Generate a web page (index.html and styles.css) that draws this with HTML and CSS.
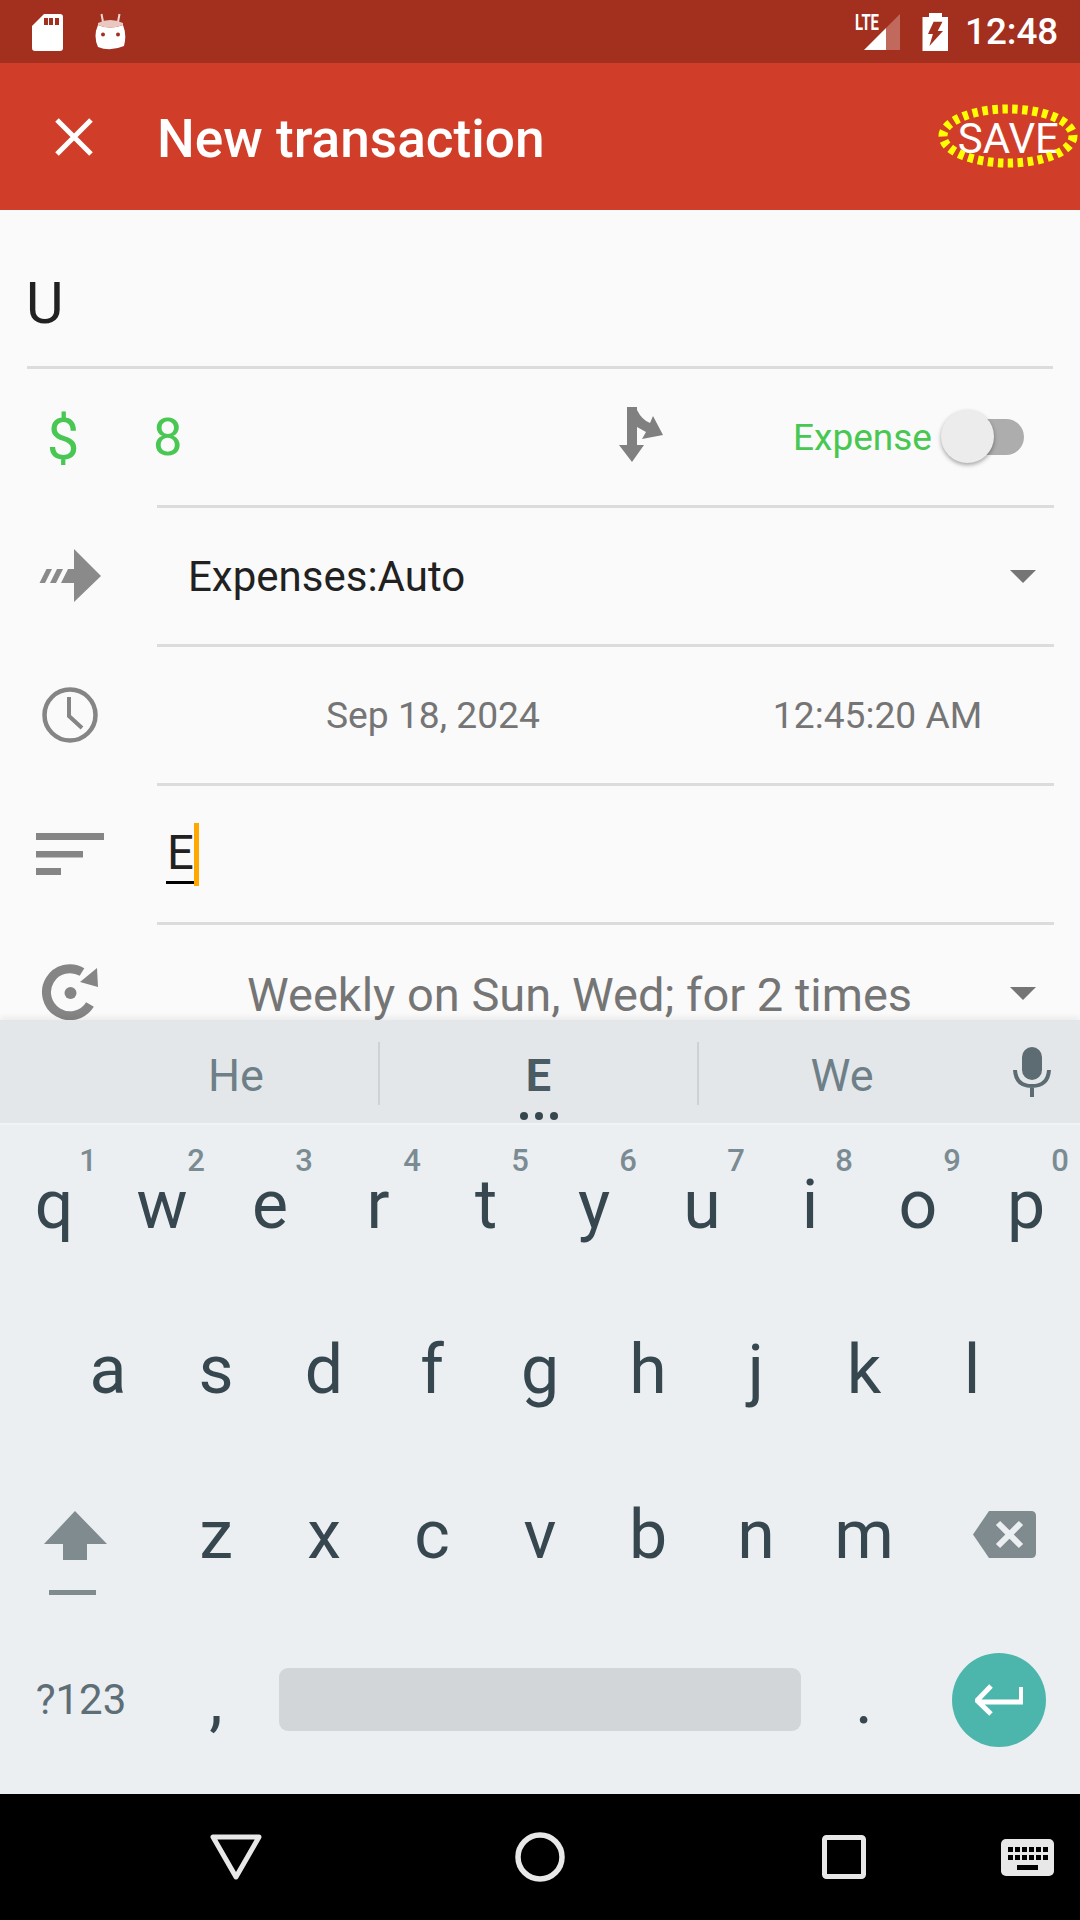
FILE: index.html
```html
<!doctype html>
<html>
<head>
<meta charset="utf-8">
<title>New transaction</title>
<link rel="stylesheet" href="styles.css">
</head>
<body>
<div class="app">
	<div class="status">
		<svg class="st-sd" width="32" height="38" viewBox="32 12 32 38"><path fill="#fff" d="M44 13H60q3 0 3 3V47q0 3-3 3H35q-3 0-3-3V25Z"/><path fill="#a32f1f" d="M44 17h4v7h-4zM49 17h4v7h-4zM55 17h4v7h-4z"/></svg>
		<svg class="st-bot" width="32" height="38" viewBox="95 10 32 38"><path stroke="#f0d8d4" stroke-width="2" d="M101.5 11l1.5 8M119.500 11l-1.500 8"/><path fill="#fff" d="M98 22Q110 27 123 22Q127 32 124 43Q110 49 98 44Q93 33 98 22Z"/><path fill="#e9c8c2" d="M98 20Q110 14 123 20V22Q110 27 98 22Z"/><circle cx="103" cy="31.500" r="2" fill="#a32f1f"/><circle cx="118" cy="31.500" r="2" fill="#a32f1f"/></svg>
		<svg class="st-net" width="46" height="38" viewBox="855 12 46 38"><text x="855" y="29" class="lte" textLength="24" lengthAdjust="spacingAndGlyphs">LTE</text><path fill="#fff" d="M864 49L886 27V49Z"/><path fill="#c0695c" d="M886 27L900 13V49H886Z"/></svg>
		<svg class="st-bat" width="26" height="38" viewBox="921 12 26 38"><path fill="#fff" d="M928 12h13v4h6V50H921.500V16H928Z"/><path fill="#a32f1f" d="M932.600 20.700H941.500L936.700 30H942L928.400 45L931.900 33H927Z"/></svg>
		<span class="clock">12:48</span>
	</div>

	<div class="toolbar">
		<svg class="tb-x" width="38" height="38" viewBox="0 0 38 38"><path stroke="#fff" stroke-width="5" d="M2 2L36 36M36 2L2 36"/></svg>
		<span class="tb-title">New transaction</span>
		<div class="save">
			SAVE
			<svg class="save-ring" width="140" height="66" viewBox="0 0 140 66"><ellipse cx="70" cy="33" rx="65" ry="27" fill="none" stroke="#ff0" stroke-width="9" stroke-dasharray="5.500 4.500"/></svg>
		</div>
	</div>

	<div class="form">
		<div class="name-row"><span class="name">U</span></div>

		<div class="row amount-row">
			<span class="ic currency">$</span>
			<div class="row-in">
				<span class="amount">8</span>
				<svg class="split" width="46" height="56" viewBox="617 409 46 56"><path fill="#808080" d="M626 409H636V412Q641 422 649 425L652 418L662 437L641 441L645 434L636 429V447H643L631 464L618 447H626Z"/></svg>
				<span class="kind">Expense</span>
				<div class="switch"><div class="thumb"></div></div>
			</div>
		</div>

		<div class="row">
			<div class="ic"><svg width="64" height="54" viewBox="38 549 64 54"><path fill="#8a8a8a" d="M74 549L101 576L74 602V583H61L68 569H74ZM39.500 583L46.500 569H52L45 583ZM50 583L57 569H63L56 583Z"/></svg></div>
			<div class="row-in">
				<span class="account">Expenses:Auto</span>
				<i class="caret"></i>
			</div>
		</div>

		<div class="row">
			<div class="ic"><svg width="56" height="56" viewBox="0 0 56 56"><circle cx="28" cy="28" r="25.500" fill="none" stroke="#858585" stroke-width="4.500"/><path fill="none" stroke="#858585" stroke-width="4" d="M27 10V29L40 41"/></svg></div>
			<div class="row-in when">
				<span>Sep 18, 2024</span>
				<span>12:45:20 AM</span>
			</div>
		</div>

		<div class="row">
			<div class="ic"><svg width="68" height="42" viewBox="0 0 68 42"><path fill="#858585" d="M0 0h68v7H0zM0 18h47v6.500H0zM0 35h25v7H0z"/></svg></div>
			<div class="row-in memo">
				<span class="memo-txt">E</span><i class="cursor"></i>
			</div>
		</div>

		<div class="row">
			<div class="ic"><svg width="60" height="60" viewBox="40 963 60 60"><path fill="none" stroke="#858585" stroke-width="9" d="M82 972A23.500 23.500 0 1 0 90 1004.500"/><path fill="#858585" d="M97 968L98 987L80 982Z"/><circle cx="70.500" cy="993" r="6" fill="#858585"/></svg></div>
			<div class="row-in">
				<span class="repeat">Weekly on Sun, Wed; for 2 times</span>
				<i class="caret"></i>
			</div>
		</div>
	</div>

	<div class="kbd">
		<div class="strip">
			<span class="sug">He</span>
			<span class="sug main">E<i class="dots"><b></b><b></b><b></b></i></span>
			<span class="sug">We</span>
			<svg class="mic" width="38" height="50" viewBox="0 0 38 50"><rect x="9" y="0" width="20" height="33" rx="10" fill="#5d6b73"/><path fill="none" stroke="#5d6b73" stroke-width="4" d="M2 23Q3 39 19 39Q35 39 36 23M19 38V50"/></svg>
		</div>

		<div class="keys">
			<div class="krow">
				<span class="key">q<em>1</em></span><span class="key">w<em>2</em></span><span class="key">e<em>3</em></span><span class="key">r<em>4</em></span><span class="key">t<em>5</em></span><span class="key">y<em>6</em></span><span class="key">u<em>7</em></span><span class="key">i<em>8</em></span><span class="key">o<em>9</em></span><span class="key">p<em>0</em></span>
			</div>
			<div class="krow second">
				<span class="key">a</span><span class="key">s</span><span class="key">d</span><span class="key">f</span><span class="key">g</span><span class="key">h</span><span class="key">j</span><span class="key">k</span><span class="key">l</span>
			</div>
			<div class="krow">
				<span class="key wide"><svg class="shift" width="64" height="86" viewBox="44 1509 64 86"><path fill="#7f8b8f" d="M75 1510L107 1543H87V1559H63V1543H44ZM49 1589H96V1594H49Z"/></svg></span>
				<span class="key">z</span><span class="key">x</span><span class="key">c</span><span class="key">v</span><span class="key">b</span><span class="key">n</span><span class="key">m</span>
				<span class="key wide"><svg class="bksp" width="64" height="48" viewBox="973 1511 64 48"><path fill="#7f8b8f" d="M989 1511H1031q5 0 5 5V1553q0 5-5 5H989L973 1534.500Z"/><path stroke="#eceff1" stroke-width="6" d="M998 1523L1021 1546M1021 1523L998 1546"/></svg></span>
			</div>
			<div class="krow last">
				<span class="key wide sym">?123</span>
				<span class="key">,</span>
				<span class="space-wrap"><i class="space"></i></span>
				<span class="key">.</span>
				<span class="key wide"><span class="enter"><svg width="48" height="32" viewBox="975 1686 48 32"><path fill="none" stroke="#fff" stroke-width="5" d="M1021.500 1689V1704H978M991 1688L977 1702.500L991 1716"/></svg></span></span>
			</div>
		</div>
	</div>

	<div class="nav">
		<svg class="nav-back" width="52" height="46" viewBox="0 0 52 46"><path fill="none" stroke="#e8e8e8" stroke-width="5" stroke-linejoin="round" d="M3 3H49L26 43Z"/></svg>
		<svg class="nav-home" width="50" height="50" viewBox="0 0 50 50"><circle cx="25" cy="25" r="22" fill="none" stroke="#e8e8e8" stroke-width="5.500"/></svg>
		<svg class="nav-rec" width="44" height="44" viewBox="0 0 44 44"><rect x="2.500" y="2.500" width="39" height="39" rx="2" fill="none" stroke="#e8e8e8" stroke-width="5"/></svg>
		<svg class="nav-kb" width="53" height="37" viewBox="0 0 53 37"><rect width="53" height="37" rx="5" fill="#e8e8e8"/><path fill="#000" d="M7 8h5v5H7zM14 8h5v5h-5zM21 8h5v5h-5zM28 8h5v5h-5zM35 8h5v5h-5zM42 8h5v5h-5zM7 16h5v5H7zM14 16h5v5h-5zM21 16h5v5h-5zM28 16h5v5h-5zM35 16h5v5h-5zM42 16h5v5h-5zM16 26h21v5H16z"/></svg>
	</div>
</div>
</body>
</html>
```

FILE: styles.css
```css
* {margin:0; padding:0; box-sizing:border-box;}
html, body {width:1080px; height:1920px; overflow:hidden;}
body {font-family:Roboto, "Noto Sans", sans-serif; background:#fafafa; color:#212121;}
i, em {font-style:normal;}
svg {display:block; flex:none;}

.app {display:flex; flex-direction:column; height:1920px;}

/* status bar */
.status {height:63px; background:#a32f1f; display:flex; align-items:center; padding:0 23px 0 32px; color:#fff;}
.st-bot {margin-left:31px;}
.st-net {margin-left:auto; overflow:visible;}
.st-bat {margin-left:21px;}
.lte {font:700 22px Roboto, sans-serif; fill:#fff;}
.clock {font-size:36.75px; font-weight:500; margin-left:17px; width:92px;}

/* toolbar */
.toolbar {height:147px; background:#d03e29; display:flex; align-items:center; color:#fff; padding-left:55px;}
.tb-title {font-size:53.2px; font-weight:500; margin-left:64px; margin-top:4px;}
.save {position:relative; margin-left:auto; margin-right:21px; margin-top:4px; font-size:42px; line-height:50px;}
.save-ring {position:absolute; left:-20px; top:-11px;}

/* form */
.form {height:810px; overflow:hidden;}
.name-row {height:159px; margin:0 27px; border-bottom:3px solid #dcdcdc; display:flex; align-items:flex-end; padding-bottom:31px;}
.name {font-size:57.75px; line-height:64px; margin-left:-1px;}
.row {height:139px; display:flex; align-items:stretch; padding-right:26px;}
.ic {width:157px; flex:none; display:flex; align-items:center; justify-content:center; padding:0 17px 4px 0;}
.row-in {flex:1; border-bottom:3px solid #dcdcdc; display:flex; align-items:center; position:relative;}

.currency {font-size:58px; color:#48c752; padding:0 31px 0 0;}
.amount {font-size:52.5px; color:#48c752; width:465px; flex:none; margin:0 0 0 -4px;}
.split {margin-top:-5px;}
.kind {font-size:37px; color:#48c752; margin-left:129px;}
.switch {width:79px; height:36px; background:#adadad; border-radius:18px; margin-left:13px; position:relative; flex:none;}
.thumb {position:absolute; left:-4px; top:-9px; width:53px; height:53px; border-radius:50%; background:#ececec; box-shadow:0 2px 4px rgba(0,0,0,.35);}

.account {font-size:42px; margin-left:31px;}
.caret {width:0; height:0; border-left:13.5px solid transparent; border-right:13.500px solid transparent; border-top:13px solid #757575; position:absolute; right:18px; top:62px;}

.when {color:#757575; font-size:37.2px; padding-left:169px; gap:233px;}

.memo {padding-left:9px;}
.memo-txt {font-size:47.25px; line-height:56px; border-bottom:3px solid #000; padding:0 1px;}
.cursor {width:5px; height:63px; background:#ffa800; margin-left:-1px;}

.repeat {font-size:47px; color:#757575; margin-left:90px; margin-top:2px;}

/* keyboard */
.kbd {height:774px; background:#eceff1; display:flex; flex-direction:column; position:relative; box-shadow:0 -3px 6px rgba(0,0,0,.06);}
.strip {height:105px; background:#e3e7ea; border-bottom:2px solid #f0f3f5; display:flex; align-items:center; position:relative;}
.sug {flex:none; width:286px; font-size:45px; color:#6e7f88; text-align:center; position:relative; padding-top:8px;}
.sug:first-child {width:378px; padding-left:94px;}
.sug.main {width:321px; font-weight:700; color:#4a5b64; border:solid #ccd2d6; border-width:0 2px; height:63px; line-height:68px; margin-top:4px; padding-top:0;}
.dots {position:absolute; left:0; right:0; top:70px; display:flex; justify-content:center; gap:7px;}
.dots b {width:8px; height:8px; border-radius:50%; background:#37474f;}
.mic {margin-left:auto; margin-right:29px;}

.keys {flex:1;}
.krow {display:flex; height:165px;}
.second {padding-left:54px;}
.last {height:160px; align-items:center;}
.key {width:108px; flex:none; height:160px; line-height:160px; font-size:68px; color:#37474f; text-align:center; position:relative; display:block;}
.key em {position:absolute; left:72px; top:18px; width:32px; line-height:36px; font-size:31px; font-weight:500; color:#7b8b93;}
.wide {width:162px;}
.shift {position:absolute; left:44px; top:55px;}
.bksp {position:absolute; left:55px; top:56px;}
.sym {font-size:42px; color:#5e6e76;}
.space-wrap {width:540px; padding:0 9px 2px; flex:none;}
.space {display:block; height:63px; border-radius:9px; background:#d2d6d9;}
.enter {width:94px; height:94px; border-radius:50%; background:#4db6ac; position:absolute; left:34px; top:33px; display:flex; align-items:center; justify-content:center;}

/* nav */
.nav {height:126px; background:#000; flex:none; display:flex; align-items:center; padding-left:210px;}
.nav-home {margin-left:253px;}
.nav-rec {margin-left:257px;}
.nav-kb {margin-left:135px;}
```
